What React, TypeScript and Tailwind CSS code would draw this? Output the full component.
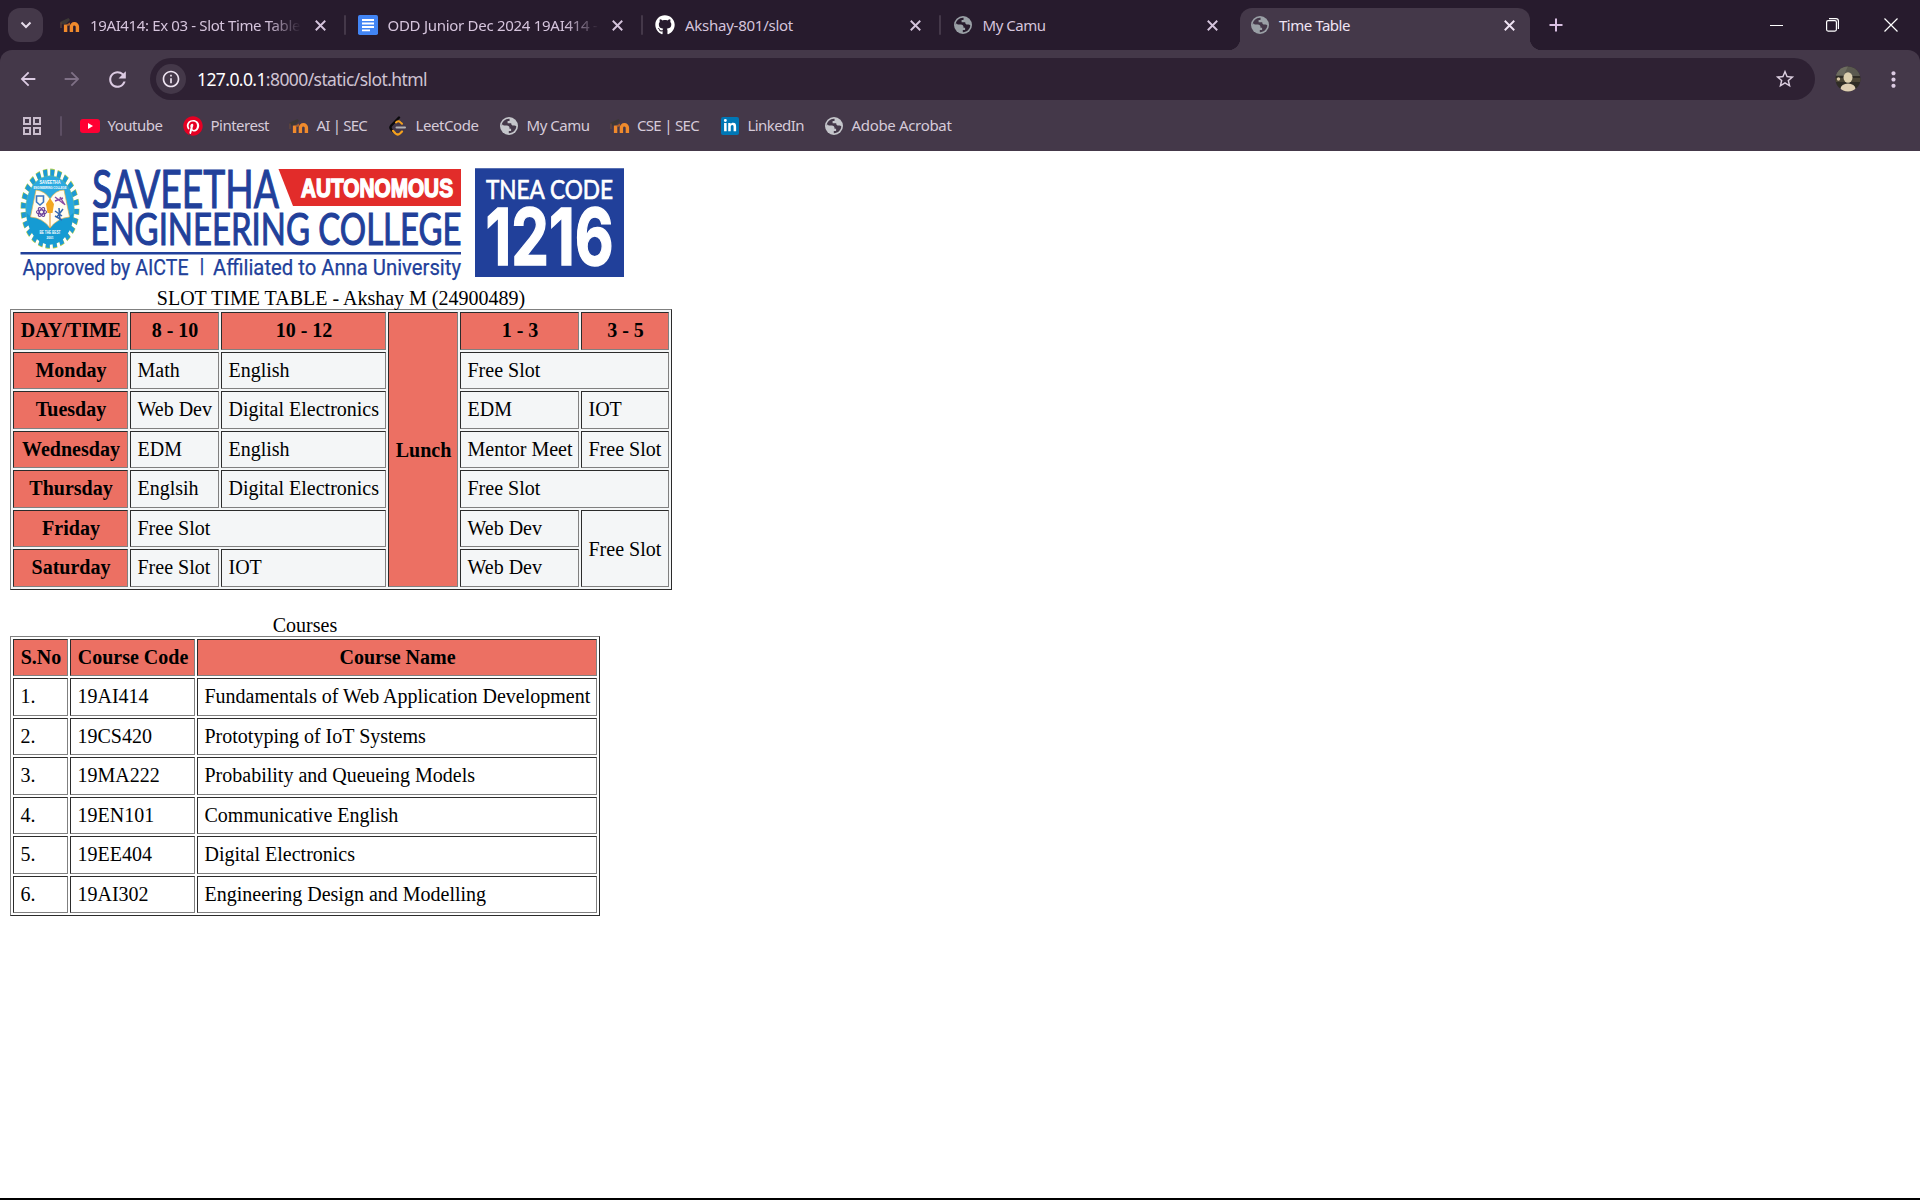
import { useLayoutEffect, useRef, useState, type ReactNode } from "react";
import { FaGithub, FaPinterest, FaLinkedinIn } from "react-icons/fa";
import {
  MdArrowBack,
  MdArrowForward,
  MdRefresh,
  MdInfoOutline,
  MdStarBorder,
  MdMoreVert,
} from "react-icons/md";

/** One line of text whose letter spacing is tuned so that it spans `width` pixels. */
function FitText({ width, children }: { width: number; children: ReactNode }) {
  const ref = useRef<HTMLSpanElement>(null);
  const [spacing, setSpacing] = useState(0);
  useLayoutEffect(() => {
    const el = ref.current;
    if (!el) return;
    const natural = el.getBoundingClientRect().width;
    const count = el.textContent?.length ?? 1;
    setSpacing((width - natural) / count);
  }, [width]);
  return (
    <span ref={ref} className="inline-block whitespace-pre" style={{ letterSpacing: `${spacing}px` }}>
      {children}
    </span>
  );
}

function Moodle() {
  return (
    <svg viewBox="0 0 20 20" className="size-5">
      <path d="M5.600 17V9.500M11.400 17v-5.200a3 3 0 0 1 6 0V17" fill="none" stroke="#f08a2c" strokeWidth="3.400" />
      <path d="M0 7 8.500 3l1.500 2-4 4-3.500.5z" fill="#3c3836" />
      <path d="M1 7.500V13" stroke="#6b4a38" strokeWidth="1.200" />
      <path d="M6.500 9.500 10 7.500v3l-3 .6z" fill="#a8602c" />
    </svg>
  );
}

function Docs() {
  return (
    <svg viewBox="0 0 20 20" className="size-5">
      <rect width="20" height="20" rx="1.800" fill="#4285f4" />
      <path d="M4 5h12M4 8.500h12M4 12h12M4 15.400h8" stroke="#fff" strokeWidth="1.800" />
    </svg>
  );
}

function Globe({ land, sea }: { land: string; sea: string }) {
  return (
    <svg viewBox="0 0 20 20" className="size-5">
      <circle cx="10" cy="10" r="9" fill={land} />
      <path
        d="M10.6 2.8c-4.2-.4-7.6 2.8-7.9 6.6h5.2c1.6 0 2.6 1.2 2.6 2.6v.7h1.6v2.2h-2.3v2.3c4.2.2 7.3-3 7.5-6.9-.9-.9-1.5-.7-2.6-.7-1.700 0-2.500-.8-2.500-2.300H8.600V5.100h1.900z"
        fill={sea}
      />
      <path d="M3.200 8.200 7.500 12.600v1.800l1.500 1.400v1.300c-4-.9-6.500-4.700-5.800-8.900z" fill={land} />
    </svg>
  );
}

function LeetCode() {
  return (
    <svg viewBox="0 0 20 20" className="size-5" fill="none" strokeLinecap="round">
      <path d="M11 1.500 3.300 9.500q-1.800 2 0 4l1.500 1.700" stroke="#0b0a0c" strokeWidth="2.400" />
      <path d="m8 6.500 1-.8q1.800-1 3.500.7l1.500 1.400" stroke="#f5a11d" strokeWidth="2" />
      <path d="m5 14.800 2.500 2.700q2.300 2 4.500 0l2-2" stroke="#f5a11d" strokeWidth="2.200" />
      <path d="M8.500 11.500h8.500" stroke="#b3b1b3" strokeWidth="2" />
    </svg>
  );
}

function Youtube() {
  return (
    <svg viewBox="0 0 20 20" className="size-5">
      <rect y="3" width="20" height="14" rx="3" fill="#ff0033" />
      <path d="m8 7 5 3-5 3z" fill="#fff" />
    </svg>
  );
}

function Pinterest() {
  return (
    <span className="flex size-5 items-center justify-center rounded-full bg-[radial-gradient(circle,#fff_8px,transparent_8.500px)]">
      <FaPinterest className="size-5 text-[#e60023]" />
    </span>
  );
}

function LinkedIn() {
  return (
    <span className="ml-px flex size-[18px] items-center justify-center rounded-xs bg-[#0077b5]">
      <FaLinkedinIn className="size-[14px] text-white" />
    </span>
  );
}

function Cross({ className }: { className: string }) {
  return (
    <svg viewBox="0 0 10 10" className={className} fill="none" stroke="currentColor">
      <path d="m.7.7 8.600 8.600M9.300.7.7 9.300" strokeWidth="1.700" />
    </svg>
  );
}

const tabs = [
  { title: "19AI414: Ex 03 - Slot Time Table", width: 210, icon: <Moodle />, fade: true },
  { title: "ODD Junior Dec 2024 19AI414 -", width: 210, icon: <Docs />, fade: true },
  { title: "Akshay-801/slot", width: 108, icon: <FaGithub className="size-5 text-white" />, fade: false },
  { title: "My Camu", width: 63, icon: <Globe land="#9aa0a6" sea="#271b2d" />, fade: false },
];

function TabStrip() {
  return (
    <div className="flex h-[50px] bg-[#271b2d] text-[15px] text-[#d5c4dc]">
      <div className="ml-2 mt-2 flex h-[34px] w-[35px] items-center justify-center rounded-xl bg-[#443849]">
        <svg viewBox="0 0 12 8" className="h-2 w-3" fill="none" stroke="#e6dcea" strokeWidth="2">
          <path d="m1.500 1.500 4.500 4.500 4.500-4.500" />
        </svg>
      </div>
      <div className="ml-[17px] flex w-[1180px]">
        {tabs.map((tab, i) => (
          <div key={tab.title} className="flex w-[297.500px] shrink-0 items-center">
            {tab.icon}
            <div
              className={
                tab.fade
                  ? "ml-[10px] w-[211px] overflow-hidden leading-5 [mask-image:linear-gradient(to_right,black_84%,transparent)]"
                  : "ml-[10px] w-[211px] overflow-hidden leading-5"
              }
            >
              <FitText width={tab.width}>{tab.title}</FitText>
            </div>
            <Cross className="ml-[13.500px] size-[11px]" />
            {i < 3 && <div className="ml-[18px] h-5 w-0.5 rounded bg-[#443849]" />}
          </div>
        ))}
      </div>
      <div className="relative mt-2 flex h-[42px] w-[290px] items-center rounded-t-xl bg-[#443849] pb-2 text-[#f0e4f4]">
        <div className="absolute -left-3 bottom-0 size-3 bg-[radial-gradient(circle_at_0_0,#271b2d_12px,#443849_12.500px)]" />
        <div className="absolute -right-3 bottom-0 size-3 bg-[radial-gradient(circle_at_100%_0,#271b2d_12px,#443849_12.500px)]" />
        <div className="ml-2.5">
          <Globe land="#9aa0a6" sea="#443849" />
        </div>
        <div className="ml-[9px] w-[225px] leading-5">
          <FitText width={71}>Time Table</FitText>
        </div>
        <Cross className="size-[11px]" />
      </div>
      <svg viewBox="0 0 14 14" className="ml-[19px] mt-[18px] size-[14px]" stroke="#d9bfe2" strokeWidth="2">
        <path d="M7 .5v13M.5 7h13" />
      </svg>
      <div className="ml-auto mr-[22px] flex h-[50px] items-center text-white">
        <div className="mr-[43px] h-px w-[13px] bg-white" />
        <svg viewBox="0 0 13 14" className="mr-[45px] h-[14px] w-[13px]" fill="none" stroke="currentColor" strokeWidth="1.200">
          <rect x=".6" y="2.600" width="9.800" height="10.500" rx="1.500" />
          <path d="M3 .6h7q2.400 0 2.400 2.400v8" />
        </svg>
        <svg viewBox="0 0 14 14" className="size-[14px]" stroke="currentColor" strokeWidth="1.200">
          <path d="m.5.5 13 13M13.500.5l-13 13" />
        </svg>
      </div>
    </div>
  );
}

function Avatar() {
  return (
    <svg viewBox="0 0 26 26" className="size-[26px]">
      <defs>
        <clipPath id="avatar">
          <circle cx="13" cy="13" r="12.500" />
        </clipPath>
      </defs>
      <g clipPath="url(#avatar)">
        <rect width="26" height="26" fill="#2f2c25" />
        <rect width="26" height="10" fill="#5a594f" />
        <path d="M0 0h13l-4 9H0z" fill="#6d6c60" />
        <path d="M0 12h26v4H0z" fill="#4b4535" />
        <circle cx="3.500" cy="13" r="1.700" fill="#d8c6a4" />
        <ellipse cx="13" cy="11.500" rx="4.500" ry="5.200" fill="#dccfae" />
        <ellipse cx="13" cy="23" rx="7.500" ry="5.500" fill="#dfcfb3" />
      </g>
    </svg>
  );
}

function Toolbar() {
  return (
    <div className="flex h-[58px] items-center text-[#dccbe3]">
      <MdArrowBack className="ml-[17px] size-[22px]" />
      <MdArrowForward className="ml-[22px] size-[22px] text-[#7f7086]" />
      <MdRefresh className="ml-[22px] size-[25px]" />
      <div className="ml-5 flex h-[42px] w-[1665px] items-center rounded-full bg-[#2e2133] pl-1.5">
        <div className="flex size-[30px] items-center justify-center rounded-full bg-[#443849]">
          <MdInfoOutline className="size-5 text-[#eee4f1]" />
        </div>
        <div className="ml-[11px] text-[17.500px] leading-6 text-[#cfc3d2]">
          <FitText width={230}>
            <span className="text-white">127.0.0.1</span>:8000/static/slot.html
          </FitText>
        </div>
        <MdStarBorder className="ml-auto mr-[19px] size-[22px] text-[#dccfe0]" />
      </div>
      <div className="ml-5">
        <Avatar />
      </div>
      <MdMoreVert className="ml-5 size-[25px]" />
    </div>
  );
}

function Bookmark({ box, icon, width, label }: { box: string; icon: ReactNode; width: number; label: string }) {
  return (
    <div className={`flex shrink-0 items-center ${box}`}>
      <div className="w-[27.500px]">{icon}</div>
      <div className="-mt-px">
        <FitText width={width}>{label}</FitText>
      </div>
    </div>
  );
}

function BookmarksBar() {
  const globe = <Globe land="#c5c6cb" sea="#443849" />;
  return (
    <div className="flex h-[43px] items-center pb-[8px] text-[15px] leading-5 text-[#d6cbd9]">
      <svg viewBox="0 0 18 18" className="ml-[23px] size-[18px]" fill="none" stroke="#c9bccc" strokeWidth="2">
        <path d="M1 1h6v6H1zM11 1h6v6h-6zM1 11h6v6H1zM11 11h6v6h-6z" />
      </svg>
      <div className="ml-[19px] mr-[18px] h-5 w-0.5 rounded bg-[#5d4f64]" />
      <Bookmark box="w-[103px]" icon={<Youtube />} width={55} label="Youtube" />
      <Bookmark box="w-[106px]" icon={<Pinterest />} width={58.5} label="Pinterest" />
      <Bookmark box="w-[99px]" icon={<Moodle />} width={50.5} label="AI | SEC" />
      <Bookmark box="w-[111px]" icon={<LeetCode />} width={63} label="LeetCode" />
      <Bookmark box="w-[110.500px]" icon={globe} width={63} label="My Camu" />
      <Bookmark box="w-[110.500px]" icon={<Moodle />} width={62} label="CSE | SEC" />
      <Bookmark box="w-[104px]" icon={<LinkedIn />} width={56.5} label="LinkedIn" />
      <Bookmark box="w-[130px]" icon={globe} width={100} label="Adobe Acrobat" />
    </div>
  );
}

function Crest() {
  return (
    <g>
      <g transform="translate(50 208.700) scale(.735 1)">
        <circle r="35.500" fill="none" stroke="#b5cf4a" strokeWidth="9.200" strokeDasharray="5.700 3.594" />
        <circle r="34.500" fill="none" stroke="#1c9ad6" strokeWidth="9.600" strokeDasharray="4.900 4.132" strokeDashoffset="-.3" />
        <circle r="33" fill="#2aa9e0" stroke="#6fb98c" strokeWidth=".6" />
        <path d="M-32 4a32 32 0 0 0 64 0L26 8Q12 6 0 20-12 6-26 8z" fill="#159bd3" />
      </g>
      <path d="M36 190q9 1 14 9 5.500-9 14-9l5.500 27q-12 1-19.500 11-7-10-19.500-11z" fill="#fffdf2" stroke="#e7b54b" strokeWidth=".7" />
      <path d="M50 199v29" stroke="#e9a23a" strokeWidth="1.200" />
      <path d="M50 198l4 6-1.500 9h-5l-1.500-9z" fill="#f2a71f" />
      <path d="M36.500 196h7v6l-3.500 3-3.500-3z" fill="none" stroke="#3d76c2" strokeWidth="1.600" />
      <path d="m55 197 9 7M55 201l8-3M60 197l5 8" stroke="#8a4ba3" strokeWidth="1.400" />
      <g fill="none" stroke="#6a3f9b" strokeWidth="1.100">
        <ellipse cx="41.500" cy="212" rx="5" ry="2" />
        <ellipse cx="41.500" cy="212" rx="5" ry="2" transform="rotate(60 41.500 212)" />
        <ellipse cx="41.500" cy="212" rx="5" ry="2" transform="rotate(120 41.500 212)" />
      </g>
      <path d="m59 208 1 12M55 211l7 5M63 209l-6 8M55 216l7 4" stroke="#3267b1" strokeWidth="1.500" />
      <g fill="#fff" fontFamily="Liberation Sans" fontWeight="700">
        <text x="39.500" y="184" fontSize="5" textLength="21" lengthAdjust="spacingAndGlyphs">SAVEETHA</text>
        <text x="33.500" y="189" fontSize="3.800" textLength="33" lengthAdjust="spacingAndGlyphs">ENGINEERING COLLEGE</text>
        <text x="39.500" y="234" fontSize="4.500" textLength="21" lengthAdjust="spacingAndGlyphs">BE THE BEST</text>
        <text x="46.500" y="239" fontSize="4" textLength="7" lengthAdjust="spacingAndGlyphs">2001</text>
      </g>
    </g>
  );
}

function CollegeBanner() {
  return (
    <svg viewBox="10 158 620 128" className="block h-[128px] w-[620px]">
      <Crest />
      <g fill="#21409a" stroke="#21409a" fontFamily="Lato">
        <text x="92" y="207.500" fontSize="53" strokeWidth="1.100" textLength="187" lengthAdjust="spacingAndGlyphs">SAVEETHA</text>
        <text x="90.500" y="245" fontSize="43.500" strokeWidth="1.100" textLength="371" lengthAdjust="spacingAndGlyphs">
          ENGINEERING COLLEGE
        </text>
      </g>
      <path d="M278.500 169H461v37H293z" fill="#e22c2a" />
      <text x="301" y="196.500" fontSize="26" fontFamily="Liberation Sans" fontWeight="700" fill="#fff" stroke="#fff" strokeWidth="1.500" textLength="152" lengthAdjust="spacingAndGlyphs">
        AUTONOMOUS
      </text>
      <path d="M20.500 252H461v2.500H20.500z" fill="#21409a" />
      <g fill="#21409a" stroke="#21409a" strokeWidth=".25" fontFamily="Roboto" fontSize="21.500">
        <text x="22.500" y="274.500" textLength="166" lengthAdjust="spacingAndGlyphs">Approved by AICTE</text>
        <text x="199.500" y="273" fontSize="20">|</text>
        <text x="213" y="274.500" textLength="248" lengthAdjust="spacingAndGlyphs">Affiliated to Anna University</text>
      </g>
      <path d="M475 168.300h149V277H475z" fill="#21409a" />
      <g fill="#fff">
        <text x="486" y="198.500" fontFamily="Lato" fontSize="26.500" stroke="#fff" strokeWidth=".7" textLength="127" lengthAdjust="spacingAndGlyphs">TNEA CODE</text>
        <text x="485.500" y="265" fontFamily="Inter" fontSize="78" fontWeight="700" stroke="#fff" strokeWidth="1.500" textLength="128" lengthAdjust="spacingAndGlyphs">1216</text>
      </g>
    </svg>
  );
}

const raised = "border border-t-[#808080] border-l-[#808080] border-r-[#2b2b2b] border-b-[#2b2b2b]";
const sunken = "border border-t-[#2b2b2b] border-l-[#2b2b2b] border-r-[#808080] border-b-[#808080]";
const th = `${sunken} bg-[#ec7063] p-0 pt-[6px] pl-px align-top text-center font-bold`;
const td = `${sunken} p-0 pt-[6px] pl-[6.500px] align-top text-left`;
const thTall = `${sunken} bg-[#ec7063] p-0 pl-px align-middle text-center font-bold`;
const tdTall = `${sunken} p-0 pl-[6.500px] align-middle text-left`;

function Timetable() {
  return (
    <table className={`w-[662px] table-fixed border-separate border-spacing-[2px] whitespace-nowrap bg-[#f4f6f7] ${raised}`}>
      <caption className="h-[23px] bg-white pt-px">SLOT TIME TABLE - Akshay M (24900489)</caption>
      <colgroup>
        <col className="w-[115px]" />
        <col className="w-[89px]" />
        <col className="w-[165px]" />
        <col className="w-[70px]" />
        <col className="w-[119px]" />
        <col className="w-[88px]" />
      </colgroup>
      <tbody>
        <tr className="h-[38px]">
          <th className={th}>DAY/TIME</th>
          <th className={th}>8 - 10</th>
          <th className={th}>10 - 12</th>
          <th className={thTall} rowSpan={7}>Lunch</th>
          <th className={th}>1 - 3</th>
          <th className={th}>3 - 5</th>
        </tr>
        <tr className="h-[37px]">
          <th className={th}>Monday</th>
          <td className={td}>Math</td>
          <td className={td}>English</td>
          <td className={td} colSpan={2}>Free Slot</td>
        </tr>
        <tr className="h-[38px]">
          <th className={th}>Tuesday</th>
          <td className={td}>Web Dev</td>
          <td className={td}>Digital Electronics</td>
          <td className={td}>EDM</td>
          <td className={td}>IOT</td>
        </tr>
        <tr className="h-[37px]">
          <th className={th}>Wednesday</th>
          <td className={td}>EDM</td>
          <td className={td}>English</td>
          <td className={td}>Mentor Meet</td>
          <td className={td}>Free Slot</td>
        </tr>
        <tr className="h-[38px]">
          <th className={th}>Thursday</th>
          <td className={td}>Englsih</td>
          <td className={td}>Digital Electronics</td>
          <td className={td} colSpan={2}>Free Slot</td>
        </tr>
        <tr className="h-[37px]">
          <th className={th}>Friday</th>
          <td className={td} colSpan={2}>Free Slot</td>
          <td className={td}>Web Dev</td>
          <td className={tdTall} rowSpan={2}>Free Slot</td>
        </tr>
        <tr className="h-[38px]">
          <th className={th}>Saturday</th>
          <td className={td}>Free Slot</td>
          <td className={td}>IOT</td>
          <td className={td}>Web Dev</td>
        </tr>
      </tbody>
    </table>
  );
}

const courses = [
  { code: "19AI414", name: "Fundamentals of Web Application Development", row: "h-[38px]" },
  { code: "19CS420", name: "Prototyping of IoT Systems", row: "h-[37px]" },
  { code: "19MA222", name: "Probability and Queueing Models", row: "h-[38px]" },
  { code: "19EN101", name: "Communicative English", row: "h-[37px]" },
  { code: "19EE404", name: "Digital Electronics", row: "h-[38px]" },
  { code: "19AI302", name: "Engineering Design and Modelling", row: "h-[37px]" },
];

function Courses() {
  return (
    <table className={`mt-[23px] w-[590px] table-fixed border-separate border-spacing-[2px] whitespace-nowrap ${raised}`}>
      <caption className="h-[23px] pt-px">Courses</caption>
      <colgroup>
        <col className="w-[55px]" />
        <col className="w-[125px]" />
        <col className="w-[400px]" />
      </colgroup>
      <tbody>
        <tr className="h-[37px]">
          <th className={th}>S.No</th>
          <th className={th}>Course Code</th>
          <th className={th}>Course Name</th>
        </tr>
        {courses.map((course, i) => (
          <tr key={course.code} className={course.row}>
            <td className={td}>{i + 1}.</td>
            <td className={td}>{course.code}</td>
            <td className={td}>{course.name}</td>
          </tr>
        ))}
      </tbody>
    </table>
  );
}

export default function App() {
  return (
    <div className="flex h-[1200px] w-[1920px] flex-col overflow-hidden border-b-2 border-black bg-white">
      <header className="bg-[#271b2d] font-['Noto_Sans',sans-serif]">
        <TabStrip />
        <div className="h-[101px] rounded-t-xl bg-[#443849]">
          <Toolbar />
          <BookmarksBar />
        </div>
      </header>
      <main className="flex flex-1 flex-col items-start pl-2.5 pt-[7px] font-['Liberation_Serif',serif] text-[20px] leading-[22px] text-black">
        <CollegeBanner />
        <Timetable />
        <Courses />
      </main>
    </div>
  );
}
